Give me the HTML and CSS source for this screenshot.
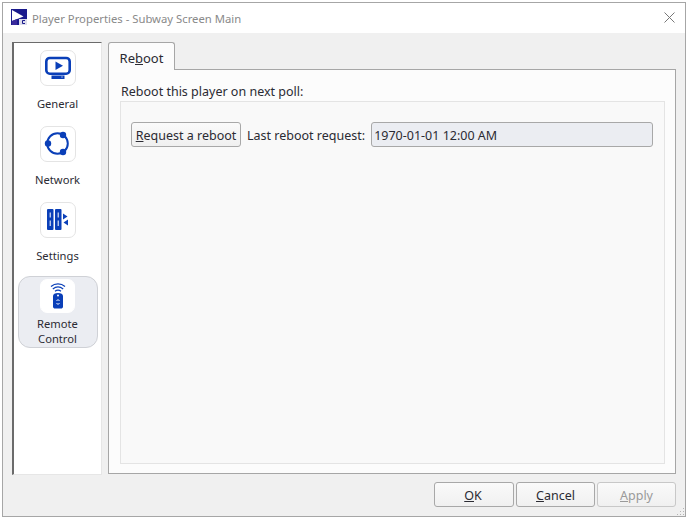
FILE: index.html
```html
<!DOCTYPE html>
<html lang="en">
<head>
<meta charset="utf-8">
<title>Player Properties</title>
<link rel="stylesheet" href="styles.css">
</head>
<body>
<div class="window">
  <header class="titlebar">
    <svg class="app-icon" width="16" height="16" viewBox="0 0 16 16">
      <rect width="16" height="16" fill="#1a1a8c"/>
      <path d="M1 1 12.500 7.500 1 12Z" fill="#fff"/>
      <path d="M1 12 6 10V16H1Z" fill="#3a2a9c"/>
      <rect x="8" y="10" width="8" height="6" fill="#dcdcec"/>
      <path d="M14 11.500H11.500V14.500H14" fill="none" stroke="#1a1a8c" stroke-width="1"/>
    </svg>
    <span class="title">Player Properties - Subway Screen Main</span>
    <svg class="close" width="11" height="11" viewBox="0 0 11 11"><path d="M.5.5 10.500 10.500M10.500.5.5 10.500" stroke="#777" stroke-width="1" fill="none"/></svg>
  </header>
  <div class="content">
    <div class="main">
      <nav class="sidebar">
        <div class="nav-item">
          <span class="nav-icon">
            <svg width="26" height="26" viewBox="0 0 26 26">
              <rect x="1.300" y="3" width="23.400" height="15.700" rx="3.500" fill="none" stroke="#0a3fb8" stroke-width="2.600"/>
              <path d="M10.500 6.500 18 10.800 10.500 15Z" fill="#0a3fb8"/>
              <rect x="6.500" y="20.500" width="13" height="3.500" fill="#0a3fb8"/>
              <rect x="16" y="21.500" width="2" height="1" fill="#8aa4e0"/>
            </svg>
          </span>
          <span class="nav-label">General</span>
        </div>
        <div class="nav-item">
          <span class="nav-icon">
            <svg width="28" height="28" viewBox="0 0 28 28">
              <circle cx="13.500" cy="13.500" r="10.300" fill="none" stroke="#0a3fb8" stroke-width="2"/>
              <circle cx="19" cy="5" r="3.200" fill="#0a3fb8"/>
              <circle cx="4" cy="13.500" r="3.200" fill="#0a3fb8"/>
              <circle cx="19" cy="22" r="3.200" fill="#0a3fb8"/>
            </svg>
          </span>
          <span class="nav-label">Network</span>
        </div>
        <div class="nav-item">
          <span class="nav-icon">
            <svg width="22" height="22" viewBox="0 0 22 22">
              <rect x="0" y="0" width="6.500" height="21" rx="1" fill="#0a3fb8"/>
              <rect x="8" y="0" width="6.500" height="21" rx="1" fill="#0a3fb8"/>
              <path d="M3.200 3.500V8.500M3.200 11.500V17M11.200 3.500V8.500M11.200 11.500V17" stroke="#fff" stroke-width="1" fill="none"/>
              <path d="M16 4.500 20.500 7.500 16 10.500Z" fill="#0a3fb8"/>
              <path d="M21 10.500 16.500 13.500 21 16.500Z" fill="#0a3fb8"/>
            </svg>
          </span>
          <span class="nav-label">Settings</span>
        </div>
        <div class="nav-item active">
          <span class="nav-icon">
            <svg width="16" height="26" viewBox="0 0 16 26">
              <path d="M1 3.500C5 0 11 0 15 3.500M2.800 6C6 3.500 10 3.500 13.200 6M5 8.300C6.800 7 9.200 7 11 8.300" fill="none" stroke="#0a3fb8" stroke-width="1.200"/>
              <path d="M3 13C3 11 5 10 8 10S13 11 13 13V23.500C13 25 12 25.500 11 25.500H5C4 25.500 3 25 3 23.500Z" fill="#0a3fb8"/>
              <circle cx="8" cy="12.500" r="1" fill="#fff"/>
              <path d="M6.500 18 8 16.500 9.500 18M6.500 20 8 21.500 9.500 20" stroke="#fff" stroke-width="1" fill="none"/>
            </svg>
          </span>
          <span class="nav-label">Remote<br>Control</span>
        </div>
      </nav>
      <section class="tabs">
        <div class="tab-strip"><div class="tab">Re<u>b</u>oot</div></div>
        <div class="tab-pane">
          <div class="group-title">Reboot this player on next poll:</div>
          <div class="group">
            <div class="row">
              <button class="btn request"><u>R</u>equest a reboot</button>
              <span class="row-label">Last reboot request:</span>
              <div class="readonly">1970-01-01 12:00 AM</div>
            </div>
          </div>
        </div>
      </section>
    </div>
    <footer class="actions">
      <button class="btn action first"><u>O</u>K</button>
      <button class="btn action"><u>C</u>ancel</button>
      <button class="btn action disabled"><u>A</u>pply</button>
    </footer>
    <svg class="grip" width="8" height="8" viewBox="0 0 8 8">
      <path d="M6 0h1v1H6zM3 3h1v1H3zM6 3h1v1H6zM0 6h1v1H0zM3 6h1v1H3zM6 6h1v1H6z" fill="#b4b4b4"/>
    </svg>
  </div>
</div>
</body>
</html>
```
FILE: styles.css
```css
* { box-sizing: border-box; }
html, body { margin: 0; height: 100%; }
body {
  background: #fff;
  padding: 2px;
  font-family: "Noto Sans", "Open Sans", sans-serif;
  font-size: 12px;
  color: #2b2b33;
}
.window {
  width: 684px;
  height: 515px;
  border: 1px solid #a6a6a6;
  display: flex;
  flex-direction: column;
  background: #f0f0f0;
}
.titlebar {
  height: 30px;
  background: #fff;
  display: flex;
  align-items: center;
  padding: 0 10px 0 8px;
  gap: 5px;
  flex: none;
}
.app-icon { flex: none; margin-top: -2px; }
.title { flex: 1; color: #8a8a8a; font-size: 11.300px; }
.close { flex: none; margin-top: -1px; }
.content {
  flex: 1;
  display: flex;
  flex-direction: column;
  padding: 9px;
  min-height: 0;
  position: relative;
}
.main { flex: 1; display: flex; gap: 6px; min-height: 0; }
.sidebar {
  width: 90px;
  height: 433px;
  background: #fff;
  border-top: 1px solid #6b6b6b;
  border-left: 2px solid #6b6b6b;
  border-right: 1px solid #e6e6e6;
  border-bottom: 1px solid #e6e6e6;
  display: flex;
  flex-direction: column;
  align-items: center;
  padding-top: 7px;
}
.nav-item {
  width: 80px;
  height: 76px;
  display: flex;
  flex-direction: column;
  align-items: center;
  flex: none;
}
.nav-icon {
  width: 36px;
  height: 36px;
  background: #fff;
  border: 1px solid #e4e4e4;
  border-radius: 7px;
  display: flex;
  align-items: center;
  justify-content: center;
}
.nav-label {
  margin-top: 10px;
  text-align: center;
  line-height: 15px;
  font-size: 11.200px;
}
.nav-item.active {
  height: 72px;
  margin-top: -2px;
  padding-top: 2px;
  background: #ebedf2;
  border: 1px solid #cfd1d6;
  border-radius: 12px;
}
.nav-item.active .nav-icon { border-color: #fff; height: 34px; width: 35px; }
.nav-item.active .nav-label { margin-top: 3px; }
.tabs { flex: 1; display: flex; flex-direction: column; min-width: 0; height: 432px; }
.tab-strip { display: flex; height: 27px; flex: none; position: relative; z-index: 1; }
.tab {
  width: 67px;
  height: 28px;
  background: #fcfcfc;
  border: 1px solid #a6a6a6;
  border-bottom: none;
  border-radius: 3px 3px 0 0;
  text-align: center;
  line-height: 30px;
  font-size: 13px;
}
.tab-pane {
  flex: 1;
  background: #fcfcfc;
  border: 1px solid #a6a6a6;
  padding: 13px 10px 9px 11px;
  display: flex;
  flex-direction: column;
  min-height: 0;
}
.group-title { line-height: 17px; height: 18px; font-size: 12.500px; padding-left: 1px; }
.group {
  flex: 1;
  background: #f9f9f9;
  border: 1px solid #e4e4e4;
  padding: 20px 11px 0 10px;
}
.row { display: flex; align-items: center; gap: 6px; }
.btn {
  font-family: inherit;
  font-size: 12.500px;
  color: #2b2b33;
  background: linear-gradient(#fafafa, #f0f0f0);
  border: 1px solid #a8a8a8;
  border-radius: 3px;
  padding: 2px 0 0;
  height: 25px;
}
.request { width: 110px; flex: none; }
.row-label { flex: none; font-size: 12.500px; padding-top: 1px; }
.readonly {
  flex: 1;
  height: 25px;
  background: #ebedf2;
  border: 1px solid #a8a8a8;
  border-radius: 3px;
  padding-left: 2px;
  line-height: 25px;
  font-size: 12.500px;
}
.actions {
  flex: none;
  display: flex;
  justify-content: flex-end;
  gap: 2px;
  padding: 7px 0 0;
  height: 32px;
}
.action { width: 79px; height: 25px; }
.action.first { width: 80px; padding-right: 2px; }
.action.disabled { color: #9a9a9a; border-color: #c8c8c8; }
.grip { position: absolute; right: 0; bottom: 0; }
```
